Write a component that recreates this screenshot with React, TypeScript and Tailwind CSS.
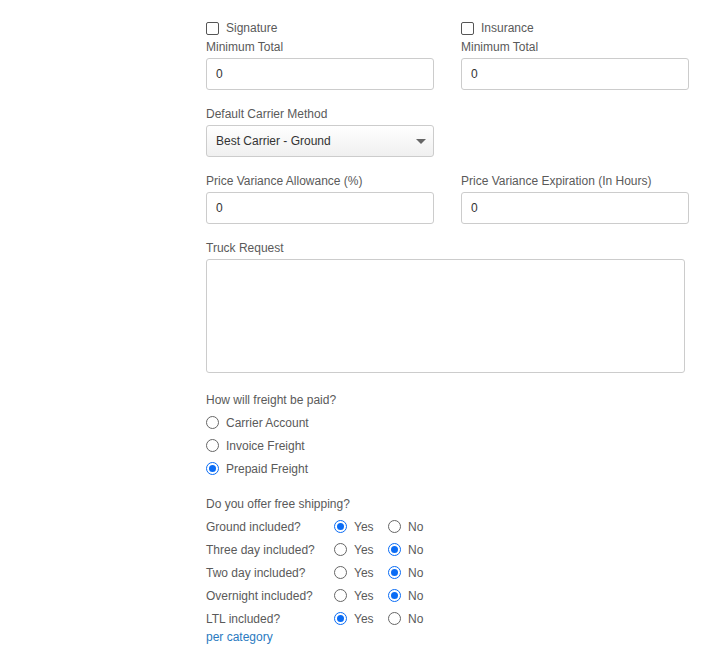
import React from 'react';

const txt = 'text-[12px] text-[#5a5a5a] leading-none';

function Field({ label, value }: { label: string; value: string }) {
  return (
    <div className="w-[228px]">
      <div className={`${txt} h-[11px] mb-[6px] flex items-center`}>{label}</div>
      <div className="h-[32px] border border-[#ccc] rounded-[3px] bg-white flex items-center px-[9px] text-[12px] text-[#333]">
        {value}
      </div>
    </div>
  );
}

function Radio({ on }: { on?: boolean }) {
  return on ? (
    <span className="w-[13px] h-[13px] rounded-full border-[1.5px] border-[#0a6cf5] flex items-center justify-center shrink-0">
      <span className="w-[7px] h-[7px] rounded-full bg-[#0a6cf5]" />
    </span>
  ) : (
    <span className="w-[13px] h-[13px] rounded-full border border-[#666] shrink-0" />
  );
}

function Check({ label }: { label: string }) {
  return (
    <div className="flex items-center gap-[7px] h-[14px]">
      <span className="w-[13px] h-[13px] rounded-[2px] border border-[#555]" />
      <span className={txt}>{label}</span>
    </div>
  );
}

const rows: [string, boolean][] = [
  ['Ground included?', true],
  ['Three day included?', false],
  ['Two day included?', false],
  ['Overnight included?', false],
  ['LTL included?', true],
];

export default function App() {
  return (
    <div className="w-[705px] h-[653px] bg-white" style={{ fontFamily: '"Liberation Sans", Arial, sans-serif' }}>
      <div className="pl-[206px] pt-[21px] w-[689px]">
        <div className="flex gap-[27px]">
          <div>
            <Check label="Signature" />
            <div className="h-[6px]" />
            <Field label="Minimum Total" value="0" />
          </div>
          <div>
            <Check label="Insurance" />
            <div className="h-[6px]" />
            <Field label="Minimum Total" value="0" />
          </div>
        </div>

        <div className="mt-[18px] w-[228px]">
          <div className={`${txt} h-[11px] mb-[6px] flex items-center`}>Default Carrier Method</div>
          <div className="h-[32px] border border-[#ccc] rounded-[3px] bg-gradient-to-b from-white to-[#f0f0f0] flex items-center justify-between px-[9px] pr-[7px] text-[12px] text-[#333]">
            Best Carrier - Ground
            <svg width="10" height="5" viewBox="0 0 10 5"><path d="M0 0h10L5 5z" fill="#666" /></svg>
          </div>
        </div>

        <div className="mt-[18px] flex gap-[27px]">
          <Field label="Price Variance Allowance (%)" value="0" />
          <Field label="Price Variance Expiration (In Hours)" value="0" />
        </div>

        <div className="mt-[18px]">
          <div className={`${txt} h-[11px] mb-[6px] flex items-center`}>Truck Request</div>
          <div className="w-[479px] h-[114px] border border-[#ccc] rounded-[3px]" />
        </div>

        <div className="mt-[21px]">
          <div className={`${txt} h-[11px] flex items-center`}>How will freight be paid?</div>
          <div className="mt-[6px]">
            {['Carrier Account', 'Invoice Freight', 'Prepaid Freight'].map((l, i) => (
              <div key={l} className="flex items-center gap-[7px] h-[23px]">
                <Radio on={i === 2} />
                <span className={txt}>{l}</span>
              </div>
            ))}
          </div>
        </div>

        <div className="mt-[18px]">
          <div className={`${txt} h-[11px] flex items-center`}>Do you offer free shipping?</div>
          <div className="mt-[6px]">
            {rows.map(([l, yes]) => (
              <div key={l} className="flex items-center h-[23px]">
                <span className={`${txt} w-[128px]`}>{l}</span>
                <Radio on={yes} />
                <span className={`${txt} ml-[7px] w-[34px]`}>Yes</span>
                <Radio on={!yes} />
                <span className={`${txt} ml-[7px]`}>No</span>
              </div>
            ))}
          </div>
          <div className="text-[12px] text-[#2a7abf] leading-none mt-[1px]">per category</div>
        </div>
      </div>
    </div>
  );
}
